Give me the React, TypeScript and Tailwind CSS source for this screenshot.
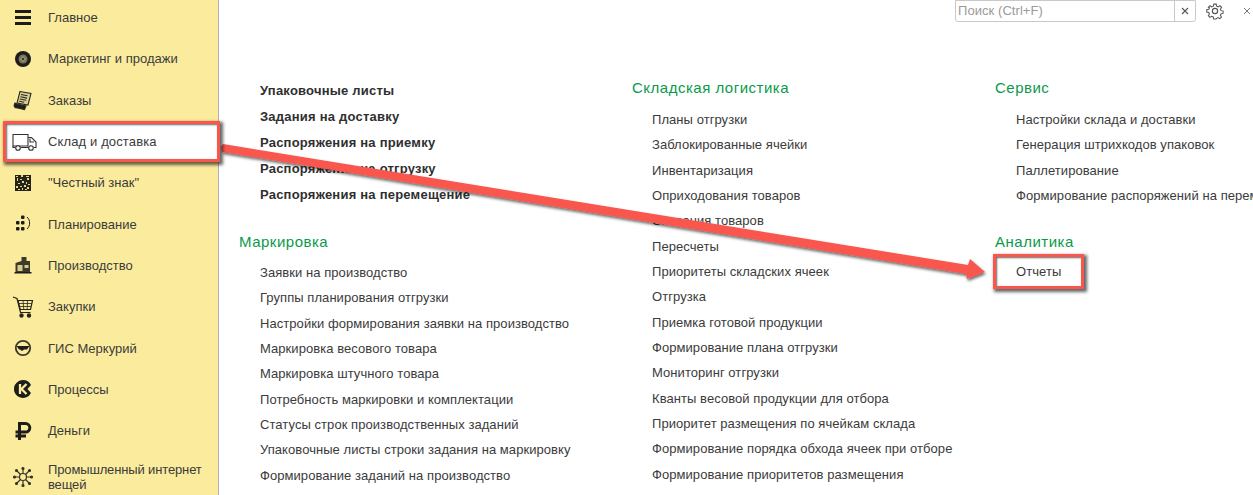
import React from "react";

const c = "#1d1d1b";
const noise = [
  [1,1,2,1],[6,0,2,2],[11,1,3,1],[2,3,1,3],[5,4,2,1],[12,3,2,2],
  [7,6,2,2],[3,8,2,1],[11,7,1,2],[13,9,2,1],[1,11,2,2],[5,11,2,1],[9,10,2,2],
  [12,12,2,2],[3,14,2,1],[7,13,1,2],[10,14,2,1],
].map(([x, y, w, h]) => ({ x: x + 3, y: y + 3, w, h }));

const icons: Record<string, React.ReactNode> = {
  menu: (<g fill={c}><rect x="3" y="3" width="16" height="3" /><rect x="3" y="9" width="16" height="3" /><rect x="3" y="15" width="16" height="3" /></g>),
  target: (<g><circle cx="11" cy="11" r="8" fill={c} /><circle cx="11" cy="11" r="4.500" fill="#77745a" /><rect x="8.500" y="8.500" width="5" height="5" fill="#8f8b6c" transform="rotate(45 11 11)" /><circle cx="11" cy="11" r="1" fill={c} /></g>),
  order: (<g fill="none" stroke="#2a2a24" strokeWidth="1.100"><path d="M8 2.500l11 2-3 11.500-11-2z" fill="#d8cf93" /><path d="M9 5.500l6.500 1.300M8.500 7.800l6.500 1.300M7.800 10l6.500 1.300M7.200 12.300l5 1" /><path d="M3 14c-2 3-.5 5 2.500 5l7 1.500 1.500-3.500-9-2z" fill={c} /></g>),
  truck: (<g fill="none" stroke="#333" strokeWidth="1.100"><path d="M1 1.500h15v11.500H1z" /><path d="M16 4.500h3.500l4.500 4.500v5.500h-2" /><path d="M1 13v1.500h2M9 14.500h9" /><circle cx="6" cy="15" r="2.300" fill="#fff" /><circle cx="19" cy="15" r="2.300" fill="#fff" /><path d="M18 5.500v3.500h4" /></g>),
  code: (<g><rect x="3" y="3" width="16" height="16" fill="#25231a" />{noise.map((n, i) => <rect key={i} x={n.x} y={n.y} width={n.w} height={n.h} fill="#e3d692" />)}</g>),
  plan: (<g fill={c}><rect x="9" y="2.500" width="3.500" height="3.500" rx="1" /><rect x="4" y="8" width="3.500" height="3.500" rx="1" /><rect x="9" y="8" width="3.500" height="3.500" rx="1" /><rect x="4" y="14" width="3.500" height="3.500" rx="1" /><rect x="9" y="14" width="3.500" height="3.500" rx="1" /><path d="M15 4c3.500 3 3.500 9 0 12" fill="none" stroke={c} strokeWidth="1" /></g>),
  factory: (<g><path d="M3.500 9l6-2V3h5v4h3.500v11h-14.500z" fill="#3d3a2c" /><rect x="5.500" y="11" width="5" height="6" fill="#d9cc88" /><rect x="12.500" y="11" width="4" height="3" fill="#d9cc88" /><rect x="2.500" y="18" width="17" height="1.500" fill={c} /></g>),
  cart: (<g fill="none" stroke="#26251c" strokeWidth="1.200"><path d="M1 1l4 1.500 3.500 14h10" /><path d="M6 4.500h14.500l-2 9H8.200z" /><path d="M6.800 7.500h13M7.500 10.500h11.500M11 4.500l.8 9M15.500 4.500l-.3 9" strokeWidth=".8" /><circle cx="9.500" cy="19.500" r="1.600" fill={c} /><circle cx="17" cy="19.500" r="1.600" fill={c} /></g>),
  hat: (<g><circle cx="11" cy="11" r="7.200" fill="none" stroke="#3a382a" strokeWidth="1.800" /><path d="M4.500 9h13l-2.500 3.500h-3l-2 1.500-2-1.500H7z" fill={c} /></g>),
  k: (<g><path d="M11 2a9 9 0 018 5l-3.500 4 3.500 4a9 9 0 11-8-13z" fill={c} /><path d="M8 6v10M14.500 6L9.500 11l5 5" fill="none" stroke="#fbec9d" strokeWidth="2.300" /></g>),
  rub: (<path d="M7.500 20V3.500h6a4.300 4.300 0 010 8.600H3.500M3.500 16h10.500" fill="none" stroke={c} strokeWidth="3" />),
  iot: (<g stroke="#37352a" strokeWidth="1.200" fill="none"><path d="M11 2v5.500M11 14.500V20M2 11h5.500M14.500 11H20M4.500 4.500l4 4M13.500 13.500l4 4M17.500 4.500l-4 4M8.500 13.500l-4 4" /><circle cx="11" cy="11" r="3.500" /><g fill="#37352a"><circle cx="11" cy="2.500" r="1" /><circle cx="11" cy="19.500" r="1" /><circle cx="2.500" cy="11" r="1" /><circle cx="19.500" cy="11" r="1" /><circle cx="4.500" cy="4.500" r="1" /><circle cx="17.500" cy="4.500" r="1" /><circle cx="4.500" cy="17.500" r="1" /><circle cx="17.500" cy="17.500" r="1" /></g></g>),
};

const sections: [string, string, boolean?][] = [
  ["menu", "Главное"],
  ["target", "Маркетинг и продажи"],
  ["order", "Заказы"],
  ["truck", "Склад и доставка", true],
  ["code", "\"Честный знак\""],
  ["plan", "Планирование"],
  ["factory", "Производство"],
  ["cart", "Закупки"],
  ["hat", "ГИС Меркурий"],
  ["k", "Процессы"],
  ["rub", "Деньги"],
];

const col1Bold = ["Упаковочные листы", "Задания на доставку", "Распоряжения на приемку", "Распоряжения на отгрузку", "Распоряжения на перемещение"];
const col1 = ["Заявки на производство", "Группы планирования отгрузки", "Настройки формирования заявки на производство", "Маркировка весового товара", "Маркировка штучного товара", "Потребность маркировки и комплектации", "Статусы строк производственных заданий", "Упаковочные листы строки задания на маркировку", "Формирование заданий на производство"];
const col2 = ["Планы отгрузки", "Заблокированные ячейки", "Инвентаризация", "Оприходования товаров", "Списания товаров", "Пересчеты", "Приоритеты складских ячеек", "Отгрузка", "Приемка готовой продукции", "Формирование плана отгрузки", "Мониторинг отгрузки", "Кванты весовой продукции для отбора", "Приоритет размещения по ячейкам склада", "Формирование порядка обхода ячеек при отборе", "Формирование приоритетов размещения"];
const col3 = ["Настройки склада и доставки", "Генерация штрихкодов упаковок", "Паллетирование", "Формирование распоряжений на перемещение"];

const hl = "shadow-[2px_2px_3px_1px_rgba(0,0,0,0.6),inset_1px_1px_2px_rgba(0,0,0,0.6)]";

function Row({ icon, label, active }: { icon: string; label: string; active?: boolean }) {
  return (
    <div className={active
      ? `h-[41.300px] -mr-[2px] ml-[3px] flex items-center bg-white border-[3px] border-[#f9564e] relative z-10 ${hl}`
      : "h-[41.300px] flex items-center"}>
      <div className={active ? "w-[42px] pl-[6px] shrink-0" : "w-[48px] pl-[12px] shrink-0"}>
        <svg className="block" width={icon === "truck" ? 25 : 22} height={icon === "truck" ? 18 : 22} viewBox={icon === "truck" ? "0 0 25 18" : "0 0 22 22"}>{icons[icon]}</svg>
      </div>
      <span className={active ? "tracking-[0.13px]" : undefined}>{label}</span>
    </div>
  );
}

const heading = "h-[26px] leading-[26px] text-[15px] tracking-[0.5px] font-normal text-[#0a9a4a]";
const item = "h-[25.340px] leading-[25.340px]";

export default function App() {
  return (
    <div className="relative w-[1253px] h-[495px] overflow-hidden bg-white flex text-[13px] leading-[15px] tracking-[0.06px] text-[#3b3b3b] whitespace-nowrap font-['Liberation_Sans',Arial,sans-serif]">
      <aside className="w-[219px] h-full shrink-0 bg-[#fbec9d] border-r border-[#b3b3b3] tracking-[0px]">
        <div className="-mt-[3px]">
          {sections.map(([i, l, a]) => <Row key={l} icon={i} label={l} active={a} />)}
          <div className="h-[41.300px] mt-[5px] flex items-center">
            <div className="w-[48px] pl-[12px] shrink-0">
              <svg className="block" width="22" height="22" viewBox="0 0 22 22">{icons.iot}</svg>
            </div>
            <span className="whitespace-normal w-[165px] tracking-[-0.14px]">Промышленный интернет вещей</span>
          </div>
        </div>
      </aside>

      <main className="relative flex-1 min-w-0 overflow-hidden">
        <div className="flex justify-end items-center h-[22px]">
          <div className="w-[241px] h-[22px] -mt-px flex border border-[#c9c9c9] rounded-b-[3px]">
            <span className="flex-1 pl-[2px] leading-[20px] text-[#9a9a9a]">Поиск (Ctrl+F)</span>
            <span className="w-[21px] border-l border-[#c9c9c9] flex items-center justify-center">
              <svg width="8" height="8" viewBox="0 0 8 8"><path d="M1 1l6 6M7 1L1 7" stroke="#555" strokeWidth="1.100" /></svg>
            </span>
          </div>
          <svg className="ml-[10px]" width="18" height="18" viewBox="0 0 24 24" fill="none" stroke="#555" strokeWidth="1.500">
            <circle cx="12" cy="12" r="3.500" />
            <path d="M10.300 2h3.400l.6 3 2.200 1 2.600-1.600 2.400 2.400L19.900 9.400l1 2.200 3 .6-.1 3.400-2.900.6-1 2.200 1.600 2.600-2.400 2.400-2.600-1.600-2.200 1-.6 1H10l-.6-3-2.200-1-2.600 1.600-2.400-2.400 1.600-2.600-1-2.200-2.900-.6v-3.400l3-.6 1-2.200L2.300 6.800l2.400-2.400 2.600 1.600 2.200-1z" transform="translate(1.100 1) scale(.91)" />
          </svg>
          <svg className="ml-[19px] mr-[2px]" width="8" height="8" viewBox="0 0 8 8"><path d="M1 1l6 6M7 1L1 7" stroke="#777" strokeWidth="1" /></svg>
        </div>

        <div className="flex pt-[56px] pl-[20px]">
          <div className="w-[393px] shrink-0">
            <div className="pl-[21px] font-bold tracking-[0.22px] text-[#2f2f2f]">
              {col1Bold.map((t) => <div key={t} className="h-[26px] leading-[26px]">{t}</div>)}
            </div>
            <h2 className={`mt-[21px] ${heading}`}>Маркировка</h2>
            <div className="pl-[21px] mt-[5px]">
              {col1.map((t) => <div key={t} className={item}>{t}</div>)}
            </div>
          </div>
          <div className="w-[363px] shrink-0">
            <h2 className={`-mt-[3px] ${heading}`}>Складская логистика</h2>
            <div className="pl-[20px] mt-[6px]">
              {col2.map((t) => <div key={t} className={item}>{t}</div>)}
            </div>
          </div>
          <div className="shrink-0">
            <h2 className={`-mt-[3px] ${heading}`}>Сервис</h2>
            <div className="pl-[21px] mt-[6px]">
              {col3.map((t) => <div key={t} className={item}>{t}</div>)}
            </div>
            <h2 className={`mt-[21px] ${heading}`}>Аналитика</h2>
            <div className={`mt-[-1px] w-[91px] h-[35px] -ml-[2px] pl-[20px] flex items-center bg-white border-[3px] border-[#f9564e] ${hl}`}>Отчеты</div>
          </div>
        </div>
      </main>

      <svg className="absolute left-0 top-0 pointer-events-none" width="1253" height="495" viewBox="0 0 1253 495">
        <defs>
          <filter id="sh" x="-5%" y="-20%" width="110%" height="140%">
            <feDropShadow dx="1" dy="2" stdDeviation="1.500" floodColor="#000" floodOpacity="0.6" />
          </filter>
        </defs>
        <polygon filter="url(#sh)" fill="#f9564e" points="221,147 223,144 968,265 970,259 985,272 967,279 966,274 222,152" />
      </svg>
    </div>
  );
}
